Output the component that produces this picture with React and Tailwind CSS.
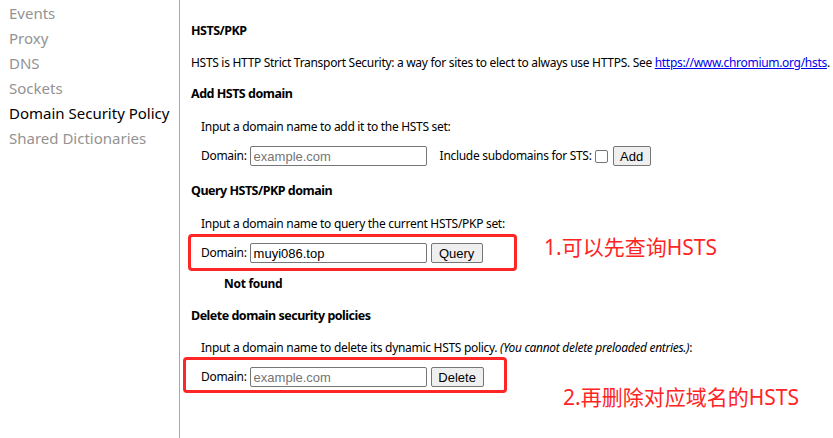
import React from 'react';

const sideItems = [
  { label: 'Events' },
  { label: 'Proxy' },
  { label: 'DNS' },
  { label: 'Sockets' },
  { label: 'Domain Security Policy', active: true },
  { label: 'Shared Dictionaries' },
];

const font = { fontFamily: '"Noto Sans", "Liberation Sans", sans-serif' };

// Text input like Chrome's default one
const DomainInput = ({ value, placeholder }) => (
  <input
    type="text"
    defaultValue={value}
    placeholder={placeholder}
    className="w-[177px] h-[20px] px-[3px] border border-[#767676] rounded-[2px] bg-white text-[13px] tracking-normal text-black placeholder:text-[#757575] outline-none font-['Liberation_Sans',sans-serif]"
  />
);

const Btn = ({ children, w }) => (
  <button className={`h-[20px] ${w} border border-[#767676] rounded-[2px] bg-[#efefef] text-[13px] tracking-normal text-black leading-none font-['Liberation_Sans',sans-serif]`}>
    {children}
  </button>
);

const Heading = ({ children, className = '' }) => (
  <h4 className={`text-[12.5px] font-bold tracking-[-0.5px] leading-[16px] text-black ${className}`}>{children}</h4>
);

export default function App() {
  return (
    <div className="relative flex w-[833px] h-[438px] overflow-hidden bg-white" style={font}>
      {/* Left nav */}
      <nav className="w-[180px] shrink-0 h-full border-r border-[#a8a8a8] pt-[1px] pl-[9px]">
        {sideItems.map((item) => (
          <div
            key={item.label}
            className={`h-[25px] leading-[25px] text-[15px] whitespace-nowrap ${item.active ? 'text-black' : 'text-[#939393]'}`}
          >
            {item.label}
          </div>
        ))}
      </nav>

      {/* Main content */}
      <main className="flex-1 min-w-0 pl-[11px] pt-[23px] text-[12px] tracking-[-0.3px] text-black whitespace-nowrap overflow-hidden">
        <Heading>HSTS/PKP</Heading>
        <p className="mt-[16px] leading-[16px]">
          HSTS is HTTP Strict Transport Security: a way for sites to elect to always use HTTPS. See{' '}
          <a href="#" className="text-[#0000ee] underline">https://www.chromium.org/hsts</a>. PKP is Public Key Pinning
        </p>

        <Heading className="mt-[15px]">Add HSTS domain</Heading>
        <div className="pl-[10px]">
          <p className="mt-[17px] leading-[16px]">Input a domain name to add it to the HSTS set:</p>
          <div className="mt-[11px] flex items-center h-[20px]">
            <span className="mr-[3px]">Domain:</span>
            <DomainInput placeholder="example.com" />
            <span className="ml-[13px]">Include subdomains for STS:</span>
            <span className="ml-[3px] w-[13px] h-[13px] border border-[#767676] rounded-[2px] bg-white" />
            <span className="ml-[5px]"><Btn w="w-[38px]">Add</Btn></span>
          </div>
        </div>

        <Heading className="mt-[17px]">Query HSTS/PKP domain</Heading>
        <div className="pl-[10px]">
          <p className="mt-[17px] leading-[16px]">Input a domain name to query the current HSTS/PKP set:</p>
          <div className="mt-[11px] flex items-center h-[20px] gap-[4px]">
            <span className="mr-[-1px]">Domain:</span>
            <DomainInput value="muyi086.top" />
            <Btn w="w-[52px]">Query</Btn>
          </div>
          <p className="mt-[13px] pl-[23px] leading-[16px] font-bold">Not found</p>
        </div>

        <Heading className="mt-[16px]">Delete domain security policies</Heading>
        <div className="pl-[10px]">
          <p className="mt-[16px] leading-[16px]">
            Input a domain name to delete its dynamic HSTS policy. <i>(You cannot delete preloaded entries.)</i>:
          </p>
          <div className="mt-[11px] flex items-center h-[20px] gap-[4px]">
            <span className="mr-[-1px]">Domain:</span>
            <DomainInput placeholder="example.com" />
            <Btn w="w-[53px]">Delete</Btn>
          </div>
        </div>
      </main>

      {/* Annotation overlays */}
      <div className="absolute left-[188px] top-[234px] w-[329px] h-[37px] border-[3px] border-[#ff2626] rounded-[4px] pointer-events-none" />
      <div className="absolute left-[183px] top-[357px] w-[324px] h-[36px] border-[3px] border-[#ff2626] rounded-[4px] pointer-events-none" />
      <div className="absolute left-[544px] top-[233px] text-[21px] leading-[28px] text-[#ff2424] whitespace-nowrap font-['Noto_Sans','Noto_Sans_CJK_SC',sans-serif]">
        1.可以先查询HSTS
      </div>
      <div className="absolute left-[563px] top-[383px] text-[21px] leading-[28px] text-[#ff2424] whitespace-nowrap font-['Noto_Sans','Noto_Sans_CJK_SC',sans-serif]">
        2.再删除对应域名的HSTS
      </div>
    </div>
  );
}
